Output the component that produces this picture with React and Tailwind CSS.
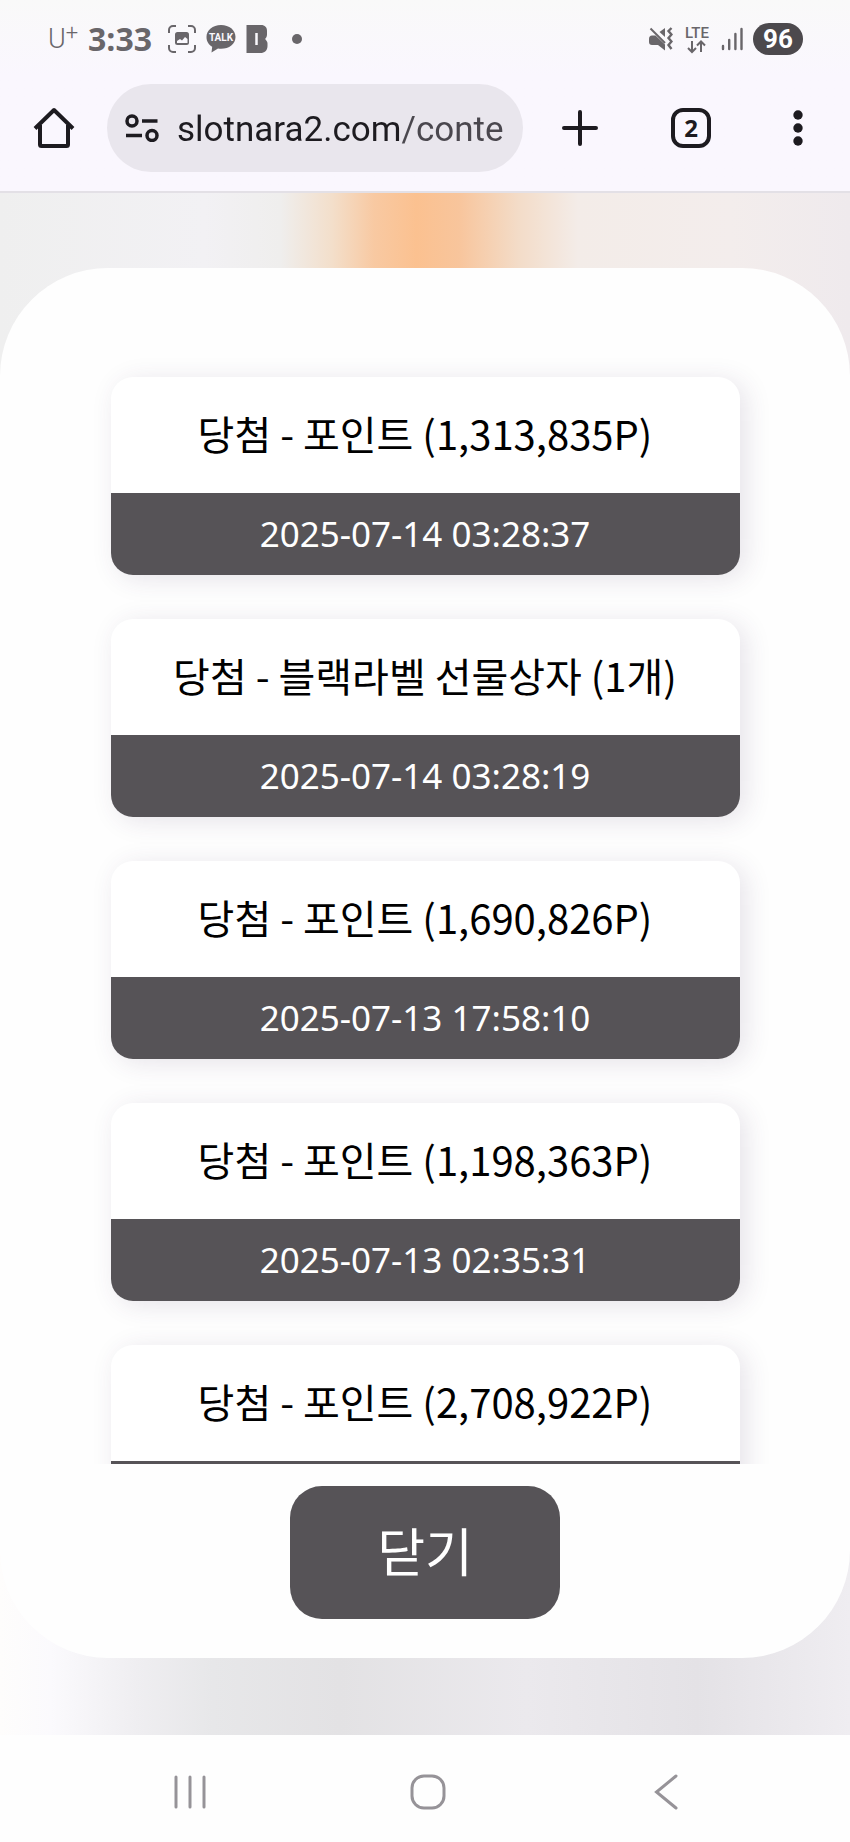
import { useState } from 'react';

const WINS = [
  { id: 1, title: '당첨 - 포인트 (1,313,835P)', date: '2025-07-14 03:28:37' },
  { id: 2, title: '당첨 - 블랙라벨 선물상자 (1개)', date: '2025-07-14 03:28:19' },
  { id: 3, title: '당첨 - 포인트 (1,690,826P)', date: '2025-07-13 17:58:10' },
  { id: 4, title: '당첨 - 포인트 (1,198,363P)', date: '2025-07-13 02:35:31' },
  { id: 5, title: '당첨 - 포인트 (2,708,922P)', date: '' },
];

const CaptureIcon = () => (
  <svg width="28" height="28" viewBox="0 0 28 28" fill="none" stroke="#69666a" strokeWidth="2">
    <path d="M1 8V5a4 4 0 0 1 4-4h3M20 1h3a4 4 0 0 1 4 4v3M27 20v3a4 4 0 0 1-4 4h-3M8 27H5a4 4 0 0 1-4-4v-3" />
    <rect x="7" y="7" width="14" height="13" rx="2.5" fill="#69666a" stroke="none" />
    <path d="M9 18v-2l3-2 2 1.500 3-3.500 2.500 2V18z" fill="#faf8fd" stroke="none" />
  </svg>
);

const TalkIcon = () => (
  <svg width="30" height="28" viewBox="0 0 30 28">
    <path d="M15 0C6.700 0 .500 5 .500 12c0 4.600 2.300 7.800 5.700 9.800L5.500 27.500l6.500-4c1 .2 2 .3 3 .3 8.300 0 14.500-4.800 14.500-11.800S23.300 0 15 0z" fill="#69666a" />
    <text x="15" y="16" textAnchor="middle" fontSize="10" fontWeight="700" fill="#faf8fd" fontFamily="Roboto, sans-serif">TALK</text>
  </svg>
);

const BlockIcon = () => (
  <svg width="22" height="28" viewBox="0 0 22 28">
    <path d="M.500 0H15c4 0 6 2.500 6 6v3.500c0 2-1 3.500-2 4.500 1 1 2.500 2.500 2.500 4.500V21c0 4.500-3 7-7 7H.500z" fill="#69666a" />
    <path d="M10.500 8v12" stroke="#faf8fd" strokeWidth="2.500" />
  </svg>
);

const MuteIcon = () => (
  <svg width="24" height="24" viewBox="0 0 24 24" fill="#69666a">
    <path d="M0 12Q0 8.500 3 8.500h3.500L16 17.500V23.500L9 18H3q-3 0-3-3z" />
    <path d="M10.500 5 16 1v9z" />
    <path d="M1.500 1.500 16 16" stroke="#69666a" strokeWidth="2" />
    <path d="M22.500 1 19.500 4l3 3.500-3 3.500 3 3.500-3 3.500 3 4" fill="none" stroke="#69666a" strokeWidth="2.400" />
  </svg>
);

const DataIcon = () => (
  <svg width="28" height="34" viewBox="0 0 28 34">
    <text x="14" y="16" textAnchor="middle" fontSize="15" fontWeight="500" fill="#69666a" fontFamily="Roboto, sans-serif">LTE</text>
    <path d="M9 19v10.500M5 26l4 4 4-4M18 30V19.500M14 23.500l4-4 4 4" fill="none" stroke="#69666a" strokeWidth="2" />
  </svg>
);

const SignalIcon = () => (
  <svg width="22" height="24" viewBox="0 0 22 24" stroke="#69666a" strokeWidth="2.400" strokeLinecap="round">
    <path d="M2 19v3M8.200 13v9M14.400 7v15M20.500 2v20" />
  </svg>
);

const HomeIcon = () => (
  <svg width="42" height="42" viewBox="0 0 42 42" fill="none" stroke="#1d1b20" strokeWidth="4" strokeLinejoin="round">
    <path d="M2 21.500 21 3l19 18.500" />
    <path d="M7 18v19.500q0 1.500 1.500 1.500h25q1.500 0 1.500-1.500V18" />
  </svg>
);

const SiteInfoIcon = () => (
  <svg width="34" height="28" viewBox="0 0 34 28" fill="none" stroke="#1d1b20" strokeWidth="3.500">
    <circle cx="7" cy="7" r="5" />
    <circle cx="27" cy="21.500" r="5" />
    <path d="M17 7h15.500M1 21.500h16" />
  </svg>
);

const StatusBar = () => (
  <div className="flex h-[78px] items-center justify-between pr-[47px] pl-12 text-[#69666a]">
    <div className="flex items-center">
      <span className="flex w-10 items-start text-[27px] leading-8 font-light">
        U<span className="text-[22px] leading-5">+</span>
      </span>
      <span className="w-20 font-['Open_Sans',sans-serif] text-[32px] leading-10 font-bold">3:33</span>
      <div className="flex items-center gap-2.5">
        <CaptureIcon />
        <TalkIcon />
        <BlockIcon />
      </div>
      <span className="ml-6 size-2.5 rounded-full bg-[#69666a]" />
    </div>
    <div className="flex items-center gap-2.5">
      <MuteIcon />
      <DataIcon />
      <SignalIcon />
      <span className="flex h-8 w-[50px] items-center justify-center rounded-full bg-[#4c494d] font-['Roboto',sans-serif] text-[26px] leading-8 font-bold text-white">
        96
      </span>
    </div>
  </div>
);

const Toolbar = () => (
  <div className="flex items-center pt-1.5 pb-[19px]">
    <button aria-label="Home" className="flex w-[107px] justify-center">
      <HomeIcon />
    </button>
    <div className="flex h-[88px] min-w-0 flex-1 items-center gap-[18px] rounded-full bg-[#e9e6ed] pr-4 pl-[18px]">
      <button aria-label="Site information" className="shrink-0">
        <SiteInfoIcon />
      </button>
      <input
        type="text"
        aria-label="Address"
        defaultValue="slotnara2.com/conte"
        className="w-full min-w-0 bg-linear-to-r from-[#1d1b20] from-[224px] to-[#4a474e] to-[224px] bg-clip-text pt-1 text-[35px] text-transparent outline-none"
      />
    </div>
    <button aria-label="New tab" className="flex w-[114px] justify-center">
      <svg width="36" height="36" viewBox="0 0 36 36" stroke="#1d1b20" strokeWidth="4" strokeLinecap="round">
        <path d="M18 2v32M2 18h32" />
      </svg>
    </button>
    <button aria-label="Tabs" className="flex w-[108px] justify-center">
      <span className="flex size-10 items-center justify-center rounded-xl border-4 border-[#1d1b20] font-['Open_Sans',sans-serif] text-2xl font-bold text-[#1d1b20]">
        2
      </span>
    </button>
    <button aria-label="Menu" className="flex w-[105px] justify-center">
      <svg width="10" height="36" viewBox="0 0 10 36" fill="#1d1b20">
        <circle cx="5" cy="5" r="4.700" />
        <circle cx="5" cy="18" r="4.700" />
        <circle cx="5" cy="31" r="4.700" />
      </svg>
    </button>
  </div>
);

const WinCard = ({ title, date }) => (
  <li className="shrink-0 rounded-[22px] bg-white shadow-[6px_4px_26px_rgba(70,50,90,0.13)]">
    <p className="flex h-[116px] items-center justify-center px-4 pb-1 text-[40px] whitespace-nowrap text-black">{title}</p>
    <time className="flex h-[82px] items-center justify-center rounded-b-[22px] bg-[#565357] font-['Noto_Sans',sans-serif] text-[35px] text-white">
      {date}
    </time>
  </li>
);

const NavBar = () => (
  <nav className="grid h-[107px] shrink-0 grid-cols-3 items-center bg-[#fefefe] pt-1.5 pr-[65px] pl-[71px]">
    <button aria-label="Recent apps" className="flex justify-center">
      <svg width="34" height="36" viewBox="0 0 34 36" stroke="#969398" strokeWidth="3" strokeLinecap="round">
        <path d="M3 3v30M17 3v30M31 3v30" />
      </svg>
    </button>
    <button aria-label="Home screen" className="flex justify-center">
      <svg width="36" height="36" viewBox="0 0 36 36" fill="none" stroke="#969398" strokeWidth="3">
        <rect x="2" y="2" width="32" height="32" rx="12" />
      </svg>
    </button>
    <button aria-label="Back" className="flex justify-center">
      <svg width="24" height="36" viewBox="0 0 24 36" fill="none" stroke="#969398" strokeWidth="3" strokeLinecap="round">
        <path d="M22 2 2.500 18 22 34" />
      </svg>
    </button>
  </nav>
);

export default function App() {
  const [open, setOpen] = useState(true);

  return (
    <div className="flex h-screen flex-col overflow-hidden font-['Roboto','Noto_Sans_CJK_KR',sans-serif]">
      <header className="shrink-0 border-b-2 border-[#e3e0e6] bg-linear-to-b from-[#f9f9f9] to-[#faf7fe] to-40%">
        <StatusBar />
        <Toolbar />
      </header>

      <main className="flex min-h-0 flex-1 flex-col bg-[linear-gradient(90deg,#efefef_0%,#f2f1f4_24%,#efeeed_33%,#f3dfcb_39%,#f8c9a2_44%,#fbc190_49%,#f8c59c_54%,#f3dcc8_61%,#f3ece8_68%,#f3edec_86%,#efeaed_100%),linear-gradient(90deg,#fefdfc_0%,#fbfafd_6%,#efeef1_16%,#e7e7e9_25%,#e3e2e4_40%,#ebe9ed_62%,#e4e2e6_82%,#efedf1_100%)] bg-[length:100%_50%,100%_50%] bg-[position:top,bottom] bg-no-repeat pt-[75px] pb-[77px]">
        {open && (
          <section
            role="dialog"
            aria-label="당첨"
            className="flex min-h-0 flex-1 flex-col items-center rounded-[108px] bg-[#fefefe] pt-16 pb-[39px] font-['Noto_Sans_CJK_KR',sans-serif]"
          >
            <ul className="flex min-h-0 w-full flex-1 flex-col gap-11 overflow-y-auto px-[13%] pt-[45px] pb-11 [scrollbar-width:none]">
              {WINS.map((win) => (
                <WinCard key={win.id} title={win.title} date={win.date} />
              ))}
            </ul>
            <button
              onClick={() => setOpen(false)}
              className="mt-[22px] flex h-[133px] w-[270px] shrink-0 items-center justify-center rounded-[32px] bg-[#565357] pb-1.5 text-[52px] text-white"
            >
              닫기
            </button>
          </section>
        )}
      </main>

      <NavBar />
    </div>
  );
}
